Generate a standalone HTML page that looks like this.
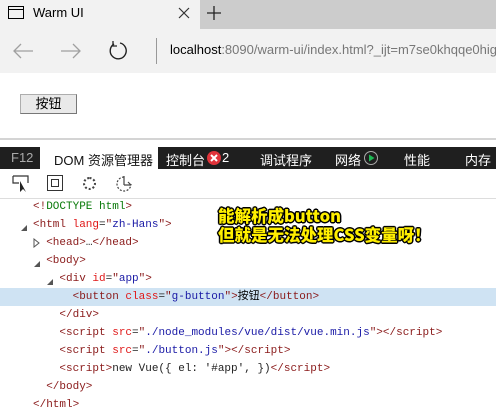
<!DOCTYPE html>
<html><head><meta charset="utf-8"><style>
*{margin:0;padding:0;box-sizing:border-box}
body{width:496px;height:420px;overflow:hidden;background:#fff;font-family:"Liberation Sans","Noto Sans CJK SC",sans-serif;position:relative}
.a{position:absolute}
.code{font-family:"Liberation Mono","Noto Sans CJK SC",monospace;font-size:11px;line-height:18px;white-space:pre;color:#222}
.t{color:#8a1a1a}.n{color:#e01818}.v{color:#1a1aa6}.g{color:#0a7a0a}
.row{position:absolute;left:0;width:496px;height:18px}
.dv{color:#fff;font-size:13px;top:150px;font-family:"Liberation Sans","Noto Sans CJK SC",sans-serif}
.ann{font-family:"Noto Sans CJK SC",sans-serif;font-weight:900;font-size:16.5px;line-height:19px;color:#ffef00;text-shadow:-1px -1px 0 #000,1px -1px 0 #000,-1px 1px 0 #000,1px 1px 0 #000,0 1.5px 0 #000,1.5px 0 0 #000,-1.5px 0 0 #000,0 -1.5px 0 #000}
</style></head><body>
<div class="a" style="left:0;top:0;width:496px;height:29px;background:#cccccc"></div>
<div class="a" style="left:0;top:0;width:200px;height:29px;background:#f2f2f2"></div>
<div class="a" style="left:8px;top:6px;width:16px;height:13px;border:1.3px solid #000"></div>
<div class="a" style="left:8px;top:9px;width:16px;height:1px;background:#000"></div>
<div class="a" style="left:33px;top:5px;font-size:13px;color:#000">Warm UI</div>
<svg class="a" style="left:178px;top:7px" width="12" height="12"><path d="M1 1L11 11M11 1L1 11" stroke="#333" stroke-width="1.2"/></svg>
<svg class="a" style="left:207px;top:6px" width="14" height="14"><path d="M7 0V14M0 7H14" stroke="#222" stroke-width="1.3"/></svg>
<div class="a" style="left:0;top:29px;width:496px;height:44px;background:#f2f2f2"></div>
<svg class="a" style="left:12px;top:42px" width="22" height="18"><path d="M21 9H2M9 2L2 9L9 16" stroke="#a0a0a0" stroke-width="1.3" fill="none"/></svg>
<svg class="a" style="left:60px;top:42px" width="22" height="18"><path d="M1 9H20M13 2L20 9L13 16" stroke="#a0a0a0" stroke-width="1.3" fill="none"/></svg>
<svg class="a" style="left:107px;top:40px" width="22" height="22"><path d="M7 4A8 8 0 1 0 13 3" stroke="#222" stroke-width="1.4" fill="none"/><path d="M6 1V6H10" stroke="#222" stroke-width="1.3" fill="none"/></svg>
<div class="a" style="left:156px;top:38px;width:1px;height:26px;background:#999"></div>
<div class="a" style="left:170px;top:42px;font-size:13px;color:#000;white-space:nowrap">localhost<span style="color:#777">:8090/warm-ui/index.html?_ijt=m7se0khqqe0hig9</span></div>
<div class="a" style="left:20px;top:94px;width:57px;height:20px;background:#e9e9e9;border:1px solid #adadad;border-right-color:#777;border-bottom-color:#777;font-size:13px;text-align:center;line-height:18px">按钮</div>
<div class="a" style="left:0;top:138px;width:496px;height:2px;background:#d4d4d4"></div>
<div class="a" style="left:0;top:147px;width:496px;height:22px;background:#1f1f1f"></div>
<div class="a" style="left:40px;top:147px;width:118px;height:22px;background:#fff"></div>
<div class="a dv" style="left:11px;color:#aaa">F12</div>
<div class="a dv" style="left:54px;color:#111">DOM 资源管理器</div>
<div class="a dv" style="left:166px">控制台</div>
<div class="a" style="left:207px;top:151px;width:14px;height:14px;border-radius:50%;background:#e0333a"></div>
<svg class="a" style="left:210px;top:154px" width="8" height="8"><path d="M1 1L7 7M7 1L1 7" stroke="#fff" stroke-width="2"/></svg>
<div class="a dv" style="left:222px">2</div>
<div class="a dv" style="left:260px">调试程序</div>
<div class="a dv" style="left:335px">网络</div>
<div class="a" style="left:364px;top:151px;width:14px;height:14px;border-radius:50%;border:1.3px solid #aaa"></div>
<svg class="a" style="left:364px;top:151px" width="14" height="14"><path d="M5 3.5L10.5 7L5 10.5Z" fill="#1db954"/></svg>
<div class="a dv" style="left:404px">性能</div>
<div class="a dv" style="left:465px">内存</div>
<svg class="a" style="left:12px;top:175px" width="20" height="18"><path d="M1 1H16V8M1 1V8H7" stroke="#333" stroke-width="1.2" fill="none"/><path d="M8 6L8 17L11 14L14 17Z" fill="#222"/></svg>
<div class="a" style="left:47px;top:175px;width:16px;height:16px;border:1.2px solid #333"></div>
<div class="a" style="left:51px;top:179px;width:8px;height:8px;border:1.2px solid #333"></div>
<div class="a" style="left:83px;top:177px;width:13px;height:13px;border-radius:50%;border:2.5px dotted #444"></div>
<svg class="a" style="left:115px;top:175px" width="18" height="18"><path d="M9 2A7 7 0 1 0 16 9" stroke="#444" stroke-width="1.2" fill="none" stroke-dasharray="2 1.5"/><path d="M9 1V10M9 10H16M13 7L16 10" stroke="#444" stroke-width="1.2" fill="none"/></svg>
<div class="a" style="left:0;top:198px;width:496px;height:1px;background:#ddd"></div>
<div class="row" style="top:288px;background:#cfe3f3"></div>
<svg class="a" style="left:20px;top:224px" width="8" height="8"><path d="M7 1V7H1Z" fill="#555"/></svg>
<svg class="a" style="left:33px;top:238px" width="8" height="10"><path d="M1 1L6 5L1 9Z" fill="none" stroke="#555"/></svg>
<svg class="a" style="left:33px;top:260px" width="8" height="8"><path d="M7 1V7H1Z" fill="#555"/></svg>
<svg class="a" style="left:46px;top:278px" width="8" height="8"><path d="M7 1V7H1Z" fill="#555"/></svg>
<div class="a code" style="left:33px;top:198px"><span class="t">&lt;!</span><span class="g">DOCTYPE html</span><span class="t">&gt;</span>
<span class="t">&lt;html </span><span class="n">lang</span>=<span class="t">"</span><span class="v">zh-Hans</span><span class="t">"&gt;</span>
  <span class="t">&lt;head&gt;</span>…<span class="t">&lt;/head&gt;</span>
  <span class="t">&lt;body&gt;</span>
    <span class="t">&lt;div </span><span class="n">id</span>=<span class="t">"</span><span class="v">app</span><span class="t">"&gt;</span>
      <span class="t">&lt;button </span><span class="n">class</span>=<span class="t">"</span><span class="v">g-button</span><span class="t">"&gt;</span><span style="color:#000">按钮</span><span class="t">&lt;/button&gt;</span>
    <span class="t">&lt;/div&gt;</span>
    <span class="t">&lt;script </span><span class="n">src</span>=<span class="t">"</span><span class="v">./node_modules/vue/dist/vue.min.js</span><span class="t">"&gt;&lt;/script&gt;</span>
    <span class="t">&lt;script </span><span class="n">src</span>=<span class="t">"</span><span class="v">./button.js</span><span class="t">"&gt;&lt;/script&gt;</span>
    <span class="t">&lt;script&gt;</span>new Vue({ el: '#app', })<span class="t">&lt;/script&gt;</span>
  <span class="t">&lt;/body&gt;</span>
<span class="t">&lt;/html&gt;</span></div>
<div class="a ann" style="left:218px;top:206px">能解析成button<br>但就是无法处理CSS变量呀！</div>
</body></html>
